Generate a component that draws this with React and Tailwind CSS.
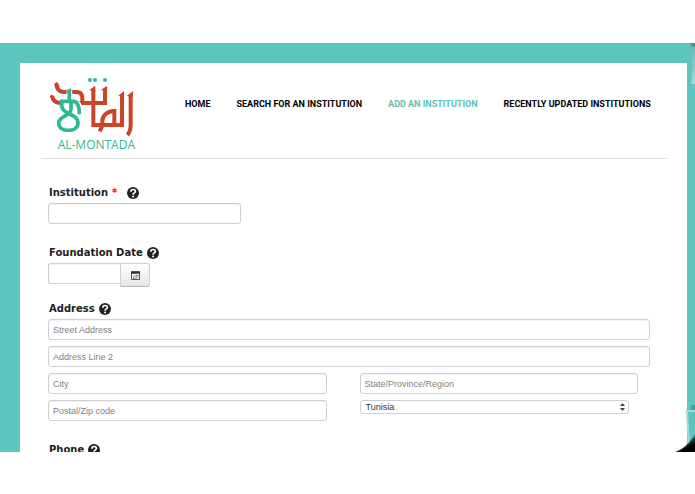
import React, { useState } from "react";

const NAV = [
  { label: "HOME", href: "#home" },
  { label: "SEARCH FOR AN INSTITUTION", href: "#search" },
  { label: "ADD AN INSTITUTION", href: "#add", active: true },
  { label: "RECENTLY UPDATED INSTITUTIONS", href: "#recent" },
];

const COUNTRIES = ["Algeria", "Egypt", "Jordan", "Lebanon", "Libya", "Morocco", "Palestine", "Tunisia"];

const INPUT = "block h-[21px] rounded-[3px] border border-[#cfcfcf] bg-white px-1 text-[9px] text-[#555] placeholder-[#808080] shadow-[inset_0_1px_1px_rgba(0,0,0,0.06)] outline-none focus:border-[#5bc5bf]";

function Logo() {
  return (
    <a href="#home" className="block w-[87px] shrink-0 font-['Open_Sans',sans-serif] text-[12px] leading-4 whitespace-nowrap text-[#2fb795]">
      <svg width="85" height="61" viewBox="150 135 255 183" fill="none" aria-hidden="true">
        <g stroke="#cb4428" strokeWidth="12">
          <path d="M170 157C168 172 177 183 192 183H229C241 183 247 190 247 202V215" />
          <path d="M156 194C158 208 166 216 184 216" />
          <path d="M232 216H315V176" />
          <path d="M280 176V282H366V190" />
          <path d="M343 282V240C322 240 307 254 307 270V284L299 301" />
          <path d="M392 190V280C392 296 389 305 382 312" />
        </g>
        <g fill="#cb4428">
          <path d="M163 161L171 152L179 167L168 169Z" />
          <path d="M150 197L154 190L164 200L155 203Z" />
          <path d="M268 177L286 164V182Z" />
          <path d="M303 177L321 164V182Z" />
          <path d="M355 194L372 180V199Z" />
          <path d="M380 195L400 180L398 199Z" />
        </g>
        <g stroke="#fff" strokeWidth="17">
          <path d="M208 178V212" />
          <path d="M182 213H223C234 213 240 224 240 250" />
        </g>
        <path d="M208 211V174M180 211H220C234 211 238 224 238 250" stroke="#2fb795" strokeWidth="11" />
        <path d="M185 208V222C185 252 234 246 234 276C234 290 221 298 205 298C189 298 176 290 176 276C176 254 213 257 213 234V211" stroke="#2fb795" strokeWidth="11" />
        <path d="M197 185L213 170V190Z" fill="#2fb795" />
        <g fill="#2fb795">
          <circle cx="270" cy="147" r="6" />
          <circle cx="285" cy="147" r="6" />
          <circle cx="315" cy="147" r="6" />
        </g>
      </svg>
      <span className="block pr-[2px] text-right">AL-MONTADA</span>
    </a>
  );
}

function HelpIcon() {
  return (
    <svg width="12" height="12" viewBox="0 0 22 22" aria-hidden="true">
      <circle cx="11" cy="11" r="11" fill="#222" />
      <path d="M7 8.5C7 3.5 15.5 3.5 15.5 8C15.5 11 11.2 10.8 11.2 14" fill="none" stroke="#fff" strokeWidth="3" />
      <circle cx="11.2" cy="17.6" r="1.8" fill="#fff" />
    </svg>
  );
}

function FieldLabel({ htmlFor, required, children }) {
  return (
    <div className="flex h-[21px] items-center pl-px font-['DejaVu_Sans',sans-serif] text-[10px] font-bold text-[#222]">
      <label htmlFor={htmlFor}>
        {children}
        {required && <span className="mr-[6px] ml-1 text-[#f00]">*</span>}
      </label>
      <button type="button" aria-label="Help" className="ml-1">
        <HelpIcon />
      </button>
    </div>
  );
}

function CalendarIcon() {
  return (
    <svg width="9" height="9" viewBox="0 0 18 18" fill="none" aria-hidden="true">
      <path d="M1 2H17V17H1Z" fill="#f4f4f4" stroke="#555" strokeWidth="2" />
      <path d="M0 3H18" stroke="#333" strokeWidth="5" />
      <path d="M7 9H15M4 12H15M4 15H11" stroke="#666" strokeWidth="2" strokeDasharray="2 1" />
    </svg>
  );
}

export default function App() {
  const [country, setCountry] = useState("Tunisia");

  return (
    <div className="bg-white pt-[43px] font-['Liberation_Sans',sans-serif]">
      <div className="relative h-[409px] overflow-hidden bg-[#5bc5bf] pt-5 pr-2 pl-5">
        <div className="min-h-full bg-white pr-5 pl-[21px]">
          <header className="flex h-24 items-start border-b border-[#dedede] pt-[13px] pl-[9px]">
            <Logo />
            <nav className="mt-[21px] ml-12 flex gap-[26px] font-['Roboto',sans-serif] text-[9px] leading-[14px] font-bold whitespace-nowrap text-black">
              {NAV.map(item => (
                <a key={item.label} href={item.href} className={item.active ? "text-[#5bc0b5]" : "hover:text-[#5bc0b5]"}>
                  {item.label}
                </a>
              ))}
            </nav>
          </header>

          <form className="pt-[23px] pr-[17px] pl-[7px]">
            <FieldLabel htmlFor="institution" required>Institution</FieldLabel>
            <input id="institution" type="text" className={`${INPUT} w-[193px]`} />

            <div className="mt-[18px]">
              <FieldLabel htmlFor="founded">Foundation Date</FieldLabel>
              <div className="flex items-start">
                <input id="founded" type="text" className={`${INPUT} w-[72px] rounded-r-none border-r-0`} />
                <button
                  type="button"
                  aria-label="Pick a date"
                  className="flex h-6 w-[30px] items-center justify-center rounded-r-[3px] border border-[#cfcfcf] border-b-[#b8b8b8] bg-linear-to-b from-white to-[#e6e6e6]"
                >
                  <CalendarIcon />
                </button>
              </div>
            </div>

            <div className="mt-[11px]">
              <FieldLabel htmlFor="street">Address</FieldLabel>
              <div className="grid gap-[6px]">
                <input id="street" type="text" placeholder="Street Address" className={`${INPUT} w-full`} />
                <input type="text" aria-label="Address Line 2" placeholder="Address Line 2" className={`${INPUT} w-full`} />
                <div className="grid grid-cols-2 items-start gap-x-[33px] gap-y-[6px] pr-3">
                  <input type="text" aria-label="City" placeholder="City" className={`${INPUT} w-full`} />
                  <input type="text" aria-label="State/Province/Region" placeholder="State/Province/Region" className={`${INPUT} w-full`} />
                  <input type="text" aria-label="Postal/Zip code" placeholder="Postal/Zip code" className={`${INPUT} w-full`} />
                  <div className="relative mr-[9px]">
                    <select
                      aria-label="Country"
                      value={country}
                      onChange={e => setCountry(e.target.value)}
                      className="block h-[14px] w-full appearance-none rounded-[3px] border border-[#cfcfcf] bg-white px-[5px] text-[9px] leading-3 text-[#333] outline-none"
                    >
                      {COUNTRIES.map(c => <option key={c}>{c}</option>)}
                    </select>
                    <svg className="pointer-events-none absolute top-[3px] right-1" width="5" height="8" viewBox="0 0 5 8" fill="#444" aria-hidden="true">
                      <path d="M0 3L2.5 0L5 3ZM0 5L2.5 8L5 5Z" />
                    </svg>
                  </div>
                </div>
              </div>
            </div>

            <div className="mt-[18px]">
              <FieldLabel htmlFor="phone">Phone</FieldLabel>
              <input id="phone" type="tel" className={`${INPUT} w-[193px]`} />
            </div>
          </form>
        </div>

        {/* curled paper edges of the backdrop */}
        <svg className="pointer-events-none absolute top-0 right-0" width="10" height="42" viewBox="0 0 10 42" aria-hidden="true">
          <defs>
            <linearGradient id="curl" x1="0" y1="0" x2="0" y2="1">
              <stop offset="0" stopColor="#6fb3b1" />
              <stop offset="1" stopColor="#a5d6d4" />
            </linearGradient>
          </defs>
          <path d="M5 0H10V41H6C8 26 8 12 5 0Z" fill="url(#curl)" />
          <path d="M5 0H10V4H7Z" fill="#4f8f8d" />
        </svg>
        <svg className="pointer-events-none absolute right-0 bottom-0" width="20" height="50" viewBox="0 0 20 50" aria-hidden="true">
          <defs>
            <linearGradient id="corner" x1="0.3" y1="0.2" x2="0.65" y2="0.75">
              <stop offset="0" stopColor="#000" stopOpacity="0" />
              <stop offset="1" stopColor="#000" />
            </linearGradient>
          </defs>
          <path d="M16 3H20V8H16Z" fill="#499c99" />
          <path d="M20 9H12L14 46" fill="none" stroke="#a9d8d5" strokeWidth="2" />
          <path d="M0 50C10 46 15 40 20 32V50Z" fill="url(#corner)" />
        </svg>
      </div>
    </div>
  );
}
